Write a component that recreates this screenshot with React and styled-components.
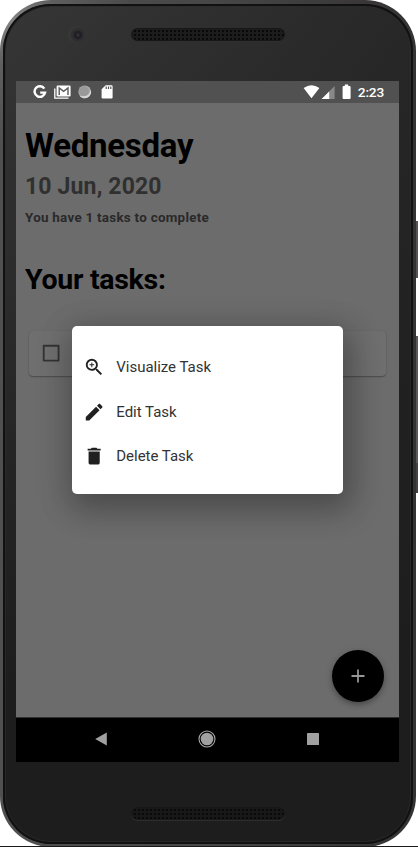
import React from "react";
import styled, { createGlobalStyle } from "styled-components";

const GlobalStyle = createGlobalStyle`
  * { box-sizing: border-box; }
  body { margin: 0; background: #fff; font-family: Roboto, "Liberation Sans", sans-serif; }
  svg { display: block; flex: none; }
`;

const Stage = styled.div`
  position: relative;
  width: 418px;
  height: 847px;
  overflow: hidden;
  border-bottom: 1px solid #1a1a1a;
`;

const SideButton = styled.div`
  position: absolute;
  right: 0;
  top: ${(p) => p.$top}px;
  width: 3px;
  height: ${(p) => p.$height}px;
  background: ${(p) => p.$color};
`;

const Phone = styled.div`
  position: relative;
  display: flex;
  flex-direction: column;
  width: 416px;
  height: 847px;
  border: 3px solid transparent;
  border-top-width: 4px;
  border-radius: 51px;
  padding: 0 14px 0 13px;
  background: linear-gradient(180deg, transparent 0, rgba(29, 29, 29, 0.35) 35%, #1d1d1d 82%) padding-box,
    linear-gradient(105deg, #363636 0, #2c2c2c 45%, #202020 100%) padding-box,
    radial-gradient(circle at 12px 20px, #858585 0, rgba(110, 110, 110, 0.5) 45px, transparent 120px) border-box,
    linear-gradient(90deg, #505050 0, #484748 50%, #343233 100%) border-box;
  box-shadow: inset 0 0 0 2px #111, inset 0 0 0 3px rgba(44, 44, 44, 0.7);
`;

const TopBezel = styled.div`
  display: flex;
  height: 77px;
  padding: 22px 0 0 52px;
`;

const BottomBezel = styled.div`
  height: 82px;
  padding: 45px 0 0 115px;
`;

const Camera = styled.div`
  width: 17px;
  height: 17px;
  border-radius: 50%;
  background: radial-gradient(circle at 10px 9px, #5a3d3a 0, #25222a 1.5px, #1f1e25 3.5px, #2e2d2f 5px, #303030 7px, #373737 8px);
`;

const Speaker = styled.div`
  width: 154px;
  height: 13px;
  margin: ${(p) => (p.$top ? "2px 0 0 46px" : "0")};
  border-radius: 7px;
  border: 1px solid #171717;
  background: radial-gradient(circle, #060606 0, #0a0a0a 0.8px, transparent 1.3px) 1px 0 / 4px 4px
    ${(p) => (p.$top ? "#1c1c1c" : "#181818")};
  box-shadow: 0 1px 0 #2e2e2e;
`;

const Screen = styled.div`
  position: relative;
  display: flex;
  flex-direction: column;
  width: 383px;
  height: 681px;
  background: #6c6c6c;
`;

const StatusBar = styled.div`
  display: flex;
  justify-content: space-between;
  align-items: center;
  height: 22px;
  padding: 0 15px 0 17px;
  background: #515151;
  color: #fff;
`;

const StatusGroup = styled.div`
  display: flex;
  align-items: center;
`;

const Clock = styled.span`
  font-size: 13.7px;
  font-weight: 500;
  letter-spacing: -0.2px;
  line-height: 22px;
  margin-left: 6px;
`;

const Content = styled.main`
  flex: 1;
  padding: 23px 9px 0;
`;

const Day = styled.h1`
  margin: 0;
  font-size: 33px;
  letter-spacing: -0.25px;
  line-height: 40px;
  font-weight: 700;
  color: #000;
`;

const DateLine = styled.div`
  height: 32px;
  padding-top: 4px;
  font-size: 23px;
  letter-spacing: 0.15px;
  line-height: 34px;
  font-weight: 700;
  color: #303030;
`;

const Summary = styled.p`
  margin: 10px 0 0;
  font-size: 13.4px;
  letter-spacing: 0.27px;
  line-height: 20px;
  font-weight: 700;
  color: #292929;
`;

const SectionTitle = styled.h2`
  margin: 34px 0 0;
  font-size: 28.5px;
  letter-spacing: -0.28px;
  line-height: 36px;
  font-weight: 700;
  color: #000;
`;

const TaskCard = styled.div`
  display: flex;
  align-items: center;
  width: 357px;
  height: 45px;
  margin: 33px 0 0 4px;
  padding-left: 11px;
  border-radius: 4px;
  background: #6f6f6f;
  box-shadow: 0 1px 1.5px rgba(0, 0, 0, 0.3), 0 0 1px rgba(0, 0, 0, 0.15);
`;

const AddButton = styled.button`
  position: absolute;
  right: 15px;
  bottom: 60px;
  display: flex;
  align-items: center;
  justify-content: center;
  width: 52px;
  height: 52px;
  padding: 0;
  border: 0;
  border-radius: 50%;
  background: #000;
  box-shadow: 0 3px 5px rgba(0, 0, 0, 0.25), 0 1px 9px rgba(0, 0, 0, 0.1);
`;

const NavBar = styled.nav`
  display: flex;
  align-items: center;
  justify-content: space-between;
  height: 45px;
  padding: 0 76px 1.5px 75px;
  background: #000;
  border-top: 1px solid #303030;
`;

const Menu = styled.div`
  position: absolute;
  left: 55.5px;
  top: 245px;
  width: 271.5px;
  height: 167.5px;
  padding: 18.5px 0 0 11px;
  border-radius: 5px;
  background: #fff;
  box-shadow: 4px 10px 30px 5px rgba(0, 0, 0, 0.27), 0 8px 40px 6px rgba(0, 0, 0, 0.07);
`;

const MenuItem = styled.div`
  display: flex;
  align-items: center;
  gap: 11.5px;
  height: 44.8px;
  font-size: 15px;
  letter-spacing: -0.02px;
  color: #333;
`;

const paths = {
  view: "M15.5,14L20.5,19L19,20.5L14,15.5V14.71L13.73,14.43C12.59,15.41 11.11,16 9.5,16A6.5,6.5 0 0,1 3,9.5A6.5,6.5 0 0,1 9.5,3A6.5,6.5 0 0,1 16,9.5C16,11.11 15.41,12.59 14.43,13.73L14.71,14H15.5M9.5,14C12,14 14,12 14,9.5C14,7 12,5 9.5,5C7,5 5,7 5,9.5C5,12 7,14 9.5,14M12,10H10V12H9V10H7V9H9V7H10V9H12V10Z",
  edit: "M20.71,7.04C21.1,6.65 21.1,6 20.71,5.63L18.37,3.29C18,2.9 17.35,2.9 16.96,3.29L15.12,5.12L18.87,8.87M3,17.25V21H6.75L17.81,9.93L14.06,6.18L3,17.25Z",
  remove: "M19,4H15.5L14.5,3H9.5L8.5,4H5V6H19M6,19A2,2 0 0,0 8,21H16A2,2 0 0,0 18,19V7H6V19Z",
  checkbox: "M20,3H4Q3,3 3,4V20Q3,21 4,21H20Q21,21 21,20V4Q21,3 20,3M19,5V19H5V5H19Z",
};

const Icon = ({ name, color = "#202020" }) => (
  <svg width="22.3" height="22.3" viewBox="0 0 24 24" fill={color}>
    <path d={paths[name]} fillRule="evenodd" />
  </svg>
);

const NotificationIcons = () => (
  <svg width="82" height="16" viewBox="0 0 82 16">
    <path d="M11.3 4.6A5.3 5.3 0 1 0 12.1 8.6H7.2" fill="none" stroke="#fff" strokeWidth="2.4" />
    <path d="M21.8 4.5V14.2H35.5" fill="none" stroke="#fff" strokeWidth="1.3" />
    <rect x="23.6" y="1.5" width="14" height="11" rx="1.2" fill="#fff" />
    <path d="M26.2 11V4L30.6 7.3L35 4V11" fill="none" stroke="#5a5a5a" strokeWidth="1.4" />
    <circle cx="51.7" cy="7.8" r="6.4" fill="#aaa" />
    <path d="M46.5 11.7A6.4 6.4 0 0 0 57.6 5.5Q57 11.5 51.5 12Q49 12.5 46.5 11.7" fill="#d5d5d5" />
    <circle cx="51" cy="7.2" r="4.9" fill="#999" />
    <path d="M72.7 1.3H78.5Q79.6 1.3 79.6 2.5V13.3Q79.6 14.5 78.4 14.5H69.8Q68.6 14.5 68.6 13.3V5.3Z" fill="#fff" />
    <path d="M73.2 2.6V4.9M75.5 2.6V4.9M77.8 2.6V4.9" stroke="#555" strokeWidth="1.2" />
  </svg>
);

const SystemIcons = () => (
  <svg width="49" height="16" viewBox="0 0 49 16">
    <path d="M0.6 4Q8.5 -1.6 16.4 4L8.5 14.2Z" fill="#fff" />
    <path d="M31.6 2V15H18.6Z" fill="#888" />
    <path d="M26.2 7.4V15H18.6Z" fill="#fff" />
    <path d="M41.8 0.5H45.2V2H46.6Q47.6 2 47.6 3V14Q47.6 15 46.6 15H40.6Q39.6 15 39.6 14V3Q39.6 2 40.6 2H41.8Z" fill="#fff" />
  </svg>
);

const menuItems = [
  { icon: "view", label: "Visualize Task" },
  { icon: "edit", label: "Edit Task" },
  { icon: "remove", label: "Delete Task" },
];

export default function App() {
  return (
    <Stage>
      <GlobalStyle />
      <SideButton $top={221} $height={57} $color="#555354" />
      <SideButton $top={336} $height={127} $color="#5a5859" />
      <SideButton $top={463} $height={30} $color="#444243" />
      <Phone>
        <TopBezel>
          <Camera />
          <Speaker $top />
        </TopBezel>
        <Screen>
          <StatusBar>
            <NotificationIcons />
            <StatusGroup>
              <SystemIcons />
              <Clock>2:23</Clock>
            </StatusGroup>
          </StatusBar>
          <Content>
            <Day>Wednesday</Day>
            <DateLine>10 Jun, 2020</DateLine>
            <Summary>You have 1 tasks to complete</Summary>
            <SectionTitle>Your tasks:</SectionTitle>
            <TaskCard>
              <Icon name="checkbox" color="#343434" />
            </TaskCard>
          </Content>
          <AddButton aria-label="Add task">
            <svg width="14" height="14" viewBox="0 0 14 14">
              <path d="M7 0.5V13.5M0.5 7H13.5" stroke="#969696" strokeWidth="1.8" />
            </svg>
          </AddButton>
          <NavBar>
            <svg width="20" height="20" viewBox="0 0 20 20">
              <path d="M4.2 10L15.8 3.5V16.5Z" fill="#a0a0a0" />
            </svg>
            <svg width="20" height="20" viewBox="0 0 20 20">
              <circle cx="10" cy="10" r="8" fill="none" stroke="#aaa" strokeWidth="1.1" />
              <circle cx="10" cy="10" r="6.3" fill="#a0a0a0" />
            </svg>
            <svg width="20" height="20" viewBox="0 0 20 20">
              <rect x="4" y="4" width="12" height="12" rx="0.5" fill="#a0a0a0" />
            </svg>
          </NavBar>
          <Menu>
            {menuItems.map((item) => (
              <MenuItem key={item.icon}>
                <Icon name={item.icon} />
                {item.label}
              </MenuItem>
            ))}
          </Menu>
        </Screen>
        <BottomBezel>
          <Speaker />
        </BottomBezel>
      </Phone>
    </Stage>
  );
}
